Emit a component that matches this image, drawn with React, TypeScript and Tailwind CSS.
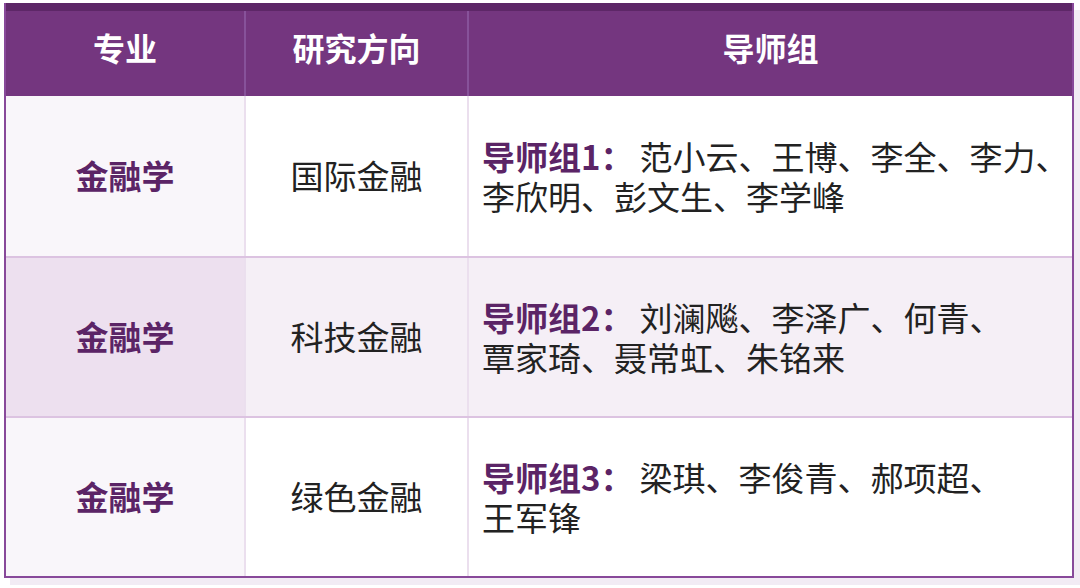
import React from 'react';

const font = {
  fontFamily: '"Noto Sans CJK SC", "Noto Sans", sans-serif',
};

const rows = [
  {
    major: '金融学',
    direction: '国际金融',
    group: '导师组1：',
    first: '范小云、王博、李全、李力、',
    second: '李欣明、彭文生、李学峰',
    shaded: false,
  },
  {
    major: '金融学',
    direction: '科技金融',
    group: '导师组2：',
    first: '刘澜飚、李泽广、何青、',
    second: '覃家琦、聂常虹、朱铭来',
    shaded: true,
  },
  {
    major: '金融学',
    direction: '绿色金融',
    group: '导师组3：',
    first: '梁琪、李俊青、郝项超、',
    second: '王军锋',
    shaded: false,
  },
];

export default function App() {
  return (
    <div className="h-[588px] w-[1080px] bg-white pt-[3px] pl-[4px]" style={font}>
      <div className="w-[1070px] border-x-2 border-b-2 border-[#88499a] shadow-[6px_7px_0_#f2ebf4]">
        {/* header */}
        <div className="grid h-[93px] grid-cols-[240px_223px_1fr] border-t-8 border-[#5d2767] bg-[#74367f] text-[32px] font-bold text-white">
          <div className="flex items-center justify-center border-r-2 border-[#87529a] pb-[14px]">专业</div>
          <div className="flex items-center justify-center border-r-2 border-[#87529a] pb-[14px]">研究方向</div>
          <div className="flex items-center justify-center pb-[14px]">导师组</div>
        </div>

        {rows.map((r, i) => (
          <div
            key={i}
            className={
              'grid h-[160px] grid-cols-[240px_223px_1fr] ' +
              (i > 0 ? 'border-t-2 border-[#dcc3e1]' : '')
            }
          >
            <div
              className={
                'flex items-center justify-center border-r-2 border-[#ebdfee] text-[33px] font-bold text-[#5b2466] ' +
                (r.shaded ? 'bg-[#ede0ef]' : 'bg-[#f9f6fa]')
              }
            >
              {r.major}
            </div>
            <div
              className={
                'flex items-center justify-center border-r-2 border-[#ebdfee] text-[33px] text-[#222] ' +
                (r.shaded ? 'bg-[#f5eff6]' : 'bg-white')
              }
            >
              {r.direction}
            </div>
            <div
              className={
                'flex flex-col justify-center pl-[13px] text-[33px] leading-[40px] whitespace-nowrap text-[#222] ' +
                (r.shaded ? 'bg-[#f5eff6]' : 'bg-white')
              }
            >
              <div className="flex">
                <span className="font-bold text-[#5b2466]">{r.group}</span>
                <span className="ml-[6px]">{r.first}</span>
              </div>
              <div>{r.second}</div>
            </div>
          </div>
        ))}
      </div>
    </div>
  );
}
